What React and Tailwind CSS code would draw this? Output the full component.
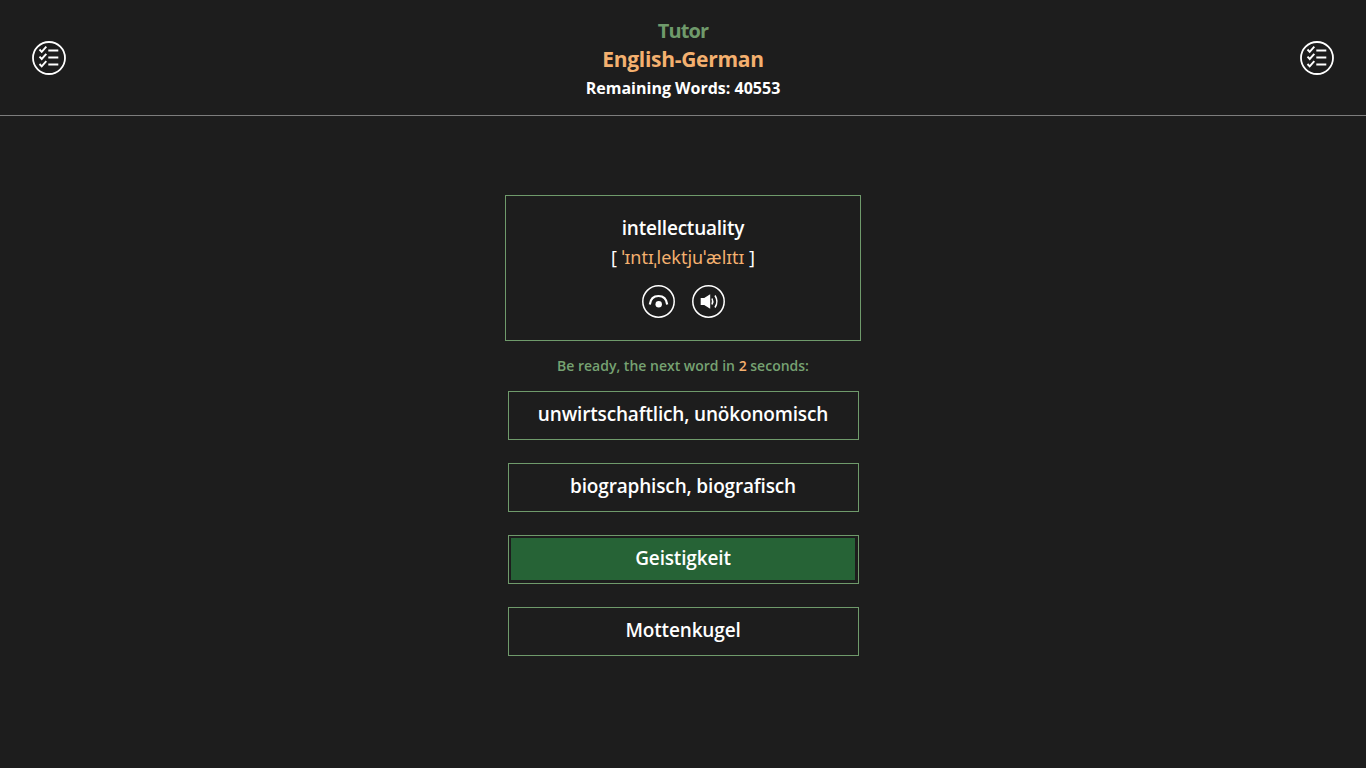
const font = { fontFamily: '"Open Sans", "Noto Sans", sans-serif' };

function ListIcon() {
  return (
    <svg width="34" height="34" viewBox="0 0 34 34" fill="none" stroke="white">
      <circle cx="17" cy="17" r="16" strokeWidth="1.8" />
      <path d="M7.5 8.5l2.2 2.3 4.6-5.2M7.5 15.7l2.2 2.3 4.6-5.2M7.5 23l2.2 2.3 4.6-5.2" strokeWidth="1.9" />
      <path d="M16.3 9.5h10M16.3 16.5h10M16.3 23.5h10" strokeWidth="2" />
    </svg>
  );
}

function EyeIcon() {
  return (
    <svg width="33" height="33" viewBox="0 0 33 33" fill="none" stroke="white">
      <circle cx="16.5" cy="16.5" r="15.7" strokeWidth="1.5" />
      <path d="M7.8 19.5C8.5 14 12 11 16.5 11s8 3 8.7 8.5" strokeWidth="2.2" />
      <circle cx="16.7" cy="19.3" r="3.2" fill="white" stroke="none" />
    </svg>
  );
}

function SpeakerIcon() {
  return (
    <svg width="33" height="33" viewBox="0 0 33 33" fill="none" stroke="white">
      <circle cx="16.5" cy="16.5" r="15.7" strokeWidth="1.5" />
      <path d="M8.7 13h3.5l6-3.8v14.6l-6-3.8H8.7z" fill="white" stroke="none" />
      <path d="M20 13.5c1 2 1 4 0 6M23 10.5c2.4 3.8 2.4 8.2 0 12" strokeWidth="1.5" />
    </svg>
  );
}

function Answer({ label, selected }) {
  return (
    <div className="w-[351px] h-[49px] border border-[#6f9a6b] pt-[2px] pl-[2px] pr-[3px] pb-[3px]">
      <div className={`h-full flex items-center justify-center text-[19px] tracking-[-0.16px] font-semibold text-white pb-[1px] pl-[1px] ${selected ? 'bg-[#266336]' : ''}`}>
        {label}
      </div>
    </div>
  );
}

export default function App() {
  const answers = ['unwirtschaftlich, unökonomisch', 'biographisch, biografisch', 'Geistigkeit', 'Mottenkugel'];

  return (
    <div className="min-h-screen bg-[#1d1d1d] text-white flex flex-col" style={font}>
      <header className="h-[116px] border-b border-[#7d7d7d] flex items-start justify-between px-[32px]">
        <div className="mt-[41px]"><ListIcon /></div>
        <div className="flex flex-col items-center font-bold pt-[17px]">
          <div className="text-[20px] leading-[28px] tracking-[-0.9px] text-[#6f9a6b]">Tutor</div>
          <div className="text-[21px] leading-[28px] tracking-[-0.3px] text-[#f4b06f]">English-German</div>
          <div className="text-[16px] leading-[30px] text-white">Remaining Words: 40553</div>
        </div>
        <div className="mt-[41px]"><ListIcon /></div>
      </header>

      <main className="flex flex-col items-center pt-[79px]">
        <section className="w-[356px] h-[146px] border border-[#6f9a6b] flex flex-col items-center pt-[18px]">
          <div className="text-[19px] leading-[28px] tracking-[-0.22px] font-semibold">intellectuality</div>
          <div className="text-[18px] leading-[26px] mt-[2px]" style={{ fontFamily: '"Noto Sans", sans-serif' }}>
            [ <span className="text-[#f4b06f]">ˈɪntɪˌlektjuˈælɪtɪ</span> ]
          </div>
          <div className="flex gap-[17px] mt-[15px]">
            <EyeIcon />
            <SpeakerIcon />
          </div>
        </section>

        <p className="text-[14px] leading-[20px] font-semibold text-[#76a272] mt-[15px] mb-[15px]">
          Be ready, the next word in <span className="text-[#f4b06f]">2</span> seconds:
        </p>

        <div className="flex flex-col gap-[23px]">
          {answers.map((a) => (
            <Answer key={a} label={a} selected={a === 'Geistigkeit'} />
          ))}
        </div>
      </main>
    </div>
  );
}
